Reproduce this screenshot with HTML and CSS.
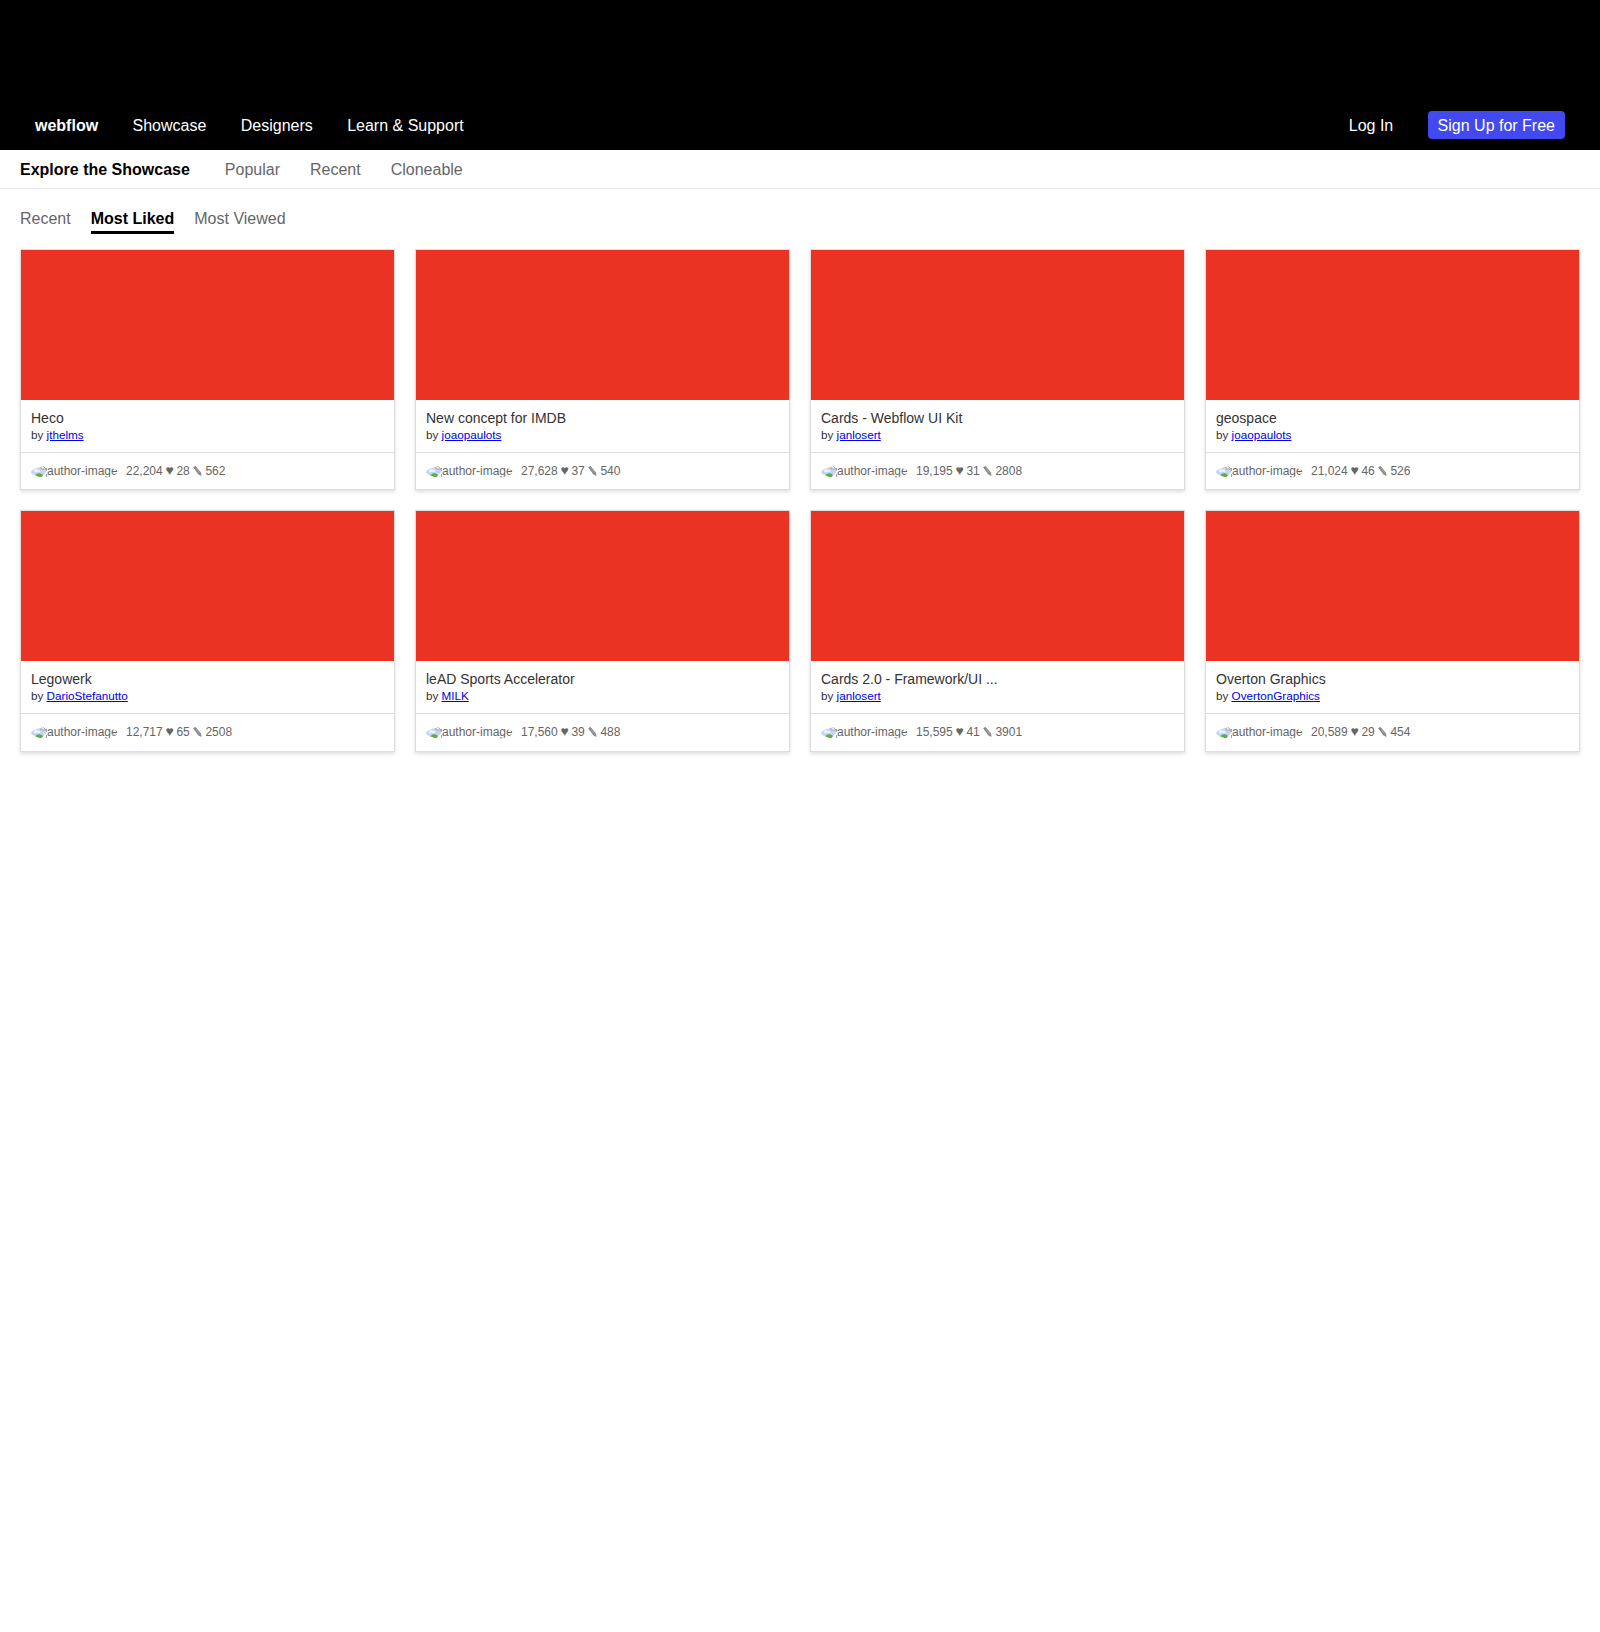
FILE: index.html
```html
<!DOCTYPE html>
<html lang="en">
<head>
<meta charset="utf-8">
<title>Webflow Showcase</title>
<link rel="stylesheet" href="styles.css">
</head>
<body>
<svg class="symbols" aria-hidden="true">
  <symbol id="broken" viewBox="0 0 16 16">
    <path d="M0 0h10l5 5v4l-5 5H0z" fill="#c5d5f5"/>
    <path d="M10 0l5 5h-5z" fill="#eee" stroke="#999" stroke-width=".8"/>
    <path d="M3 7c0-2 3-3 4-1 2-1 3 1 2 2H3z" fill="#edf3ff"/>
    <path d="M3 13c2-4 6-5 9-2l-2 3H3z" fill="#61ad45"/>
    <path d="M10 14l5-6v6z" fill="#fff"/>
    <path d="M15.5 4v3M15.5 10v3" fill="none" stroke="#999" stroke-width=".9"/>
  </symbol>
  <symbol id="pencil" viewBox="0 0 9 10">
    <path d="M.7 1.2L2.5.5l5 6 .6 2.8-2.6-1.2z" fill="#aaa" stroke="#777" stroke-width=".8"/>
    <path d="M1 2.5l2-1.5M5.3 8l2-1.5M2 2l4.5 5.5" stroke="#777" stroke-width=".6"/>
  </symbol>
</svg>
<header class="topbar">
  <nav class="topnav">
    <a class="brand">webflow</a><a>Showcase</a><a>Designers</a><a>Learn &amp; Support</a>
  </nav>
  <nav class="topnav"><a>Log In</a><a class="signup">Sign Up for Free</a></nav>
</header>
<nav class="subnav"><strong>Explore the Showcase</strong><a>Popular</a><a>Recent</a><a>Cloneable</a></nav>
<nav class="tabs"><a>Recent</a><a class="active">Most Liked</a><a>Most Viewed</a></nav>
<main class="grid">
  <article class="card"><div class="thumb"></div><div class="info"><h2>Heco</h2><p>by <a href="#">jthelms</a></p></div><footer><span class="author"><svg><use href="#broken"/></svg>author-image</span><span class="stats">22,204 <b>♥</b> 28 <svg><use href="#pencil"/></svg> 562</span></footer></article>
  <article class="card"><div class="thumb"></div><div class="info"><h2>New concept for IMDB</h2><p>by <a href="#">joaopaulots</a></p></div><footer><span class="author"><svg><use href="#broken"/></svg>author-image</span><span class="stats">27,628 <b>♥</b> 37 <svg><use href="#pencil"/></svg> 540</span></footer></article>
  <article class="card"><div class="thumb"></div><div class="info"><h2>Cards - Webflow UI Kit</h2><p>by <a href="#">janlosert</a></p></div><footer><span class="author"><svg><use href="#broken"/></svg>author-image</span><span class="stats">19,195 <b>♥</b> 31 <svg><use href="#pencil"/></svg> 2808</span></footer></article>
  <article class="card"><div class="thumb"></div><div class="info"><h2>geospace</h2><p>by <a href="#">joaopaulots</a></p></div><footer><span class="author"><svg><use href="#broken"/></svg>author-image</span><span class="stats">21,024 <b>♥</b> 46 <svg><use href="#pencil"/></svg> 526</span></footer></article>
  <article class="card"><div class="thumb"></div><div class="info"><h2>Legowerk</h2><p>by <a href="#">DarioStefanutto</a></p></div><footer><span class="author"><svg><use href="#broken"/></svg>author-image</span><span class="stats">12,717 <b>♥</b> 65 <svg><use href="#pencil"/></svg> 2508</span></footer></article>
  <article class="card"><div class="thumb"></div><div class="info"><h2>leAD Sports Accelerator</h2><p>by <a href="#">MILK</a></p></div><footer><span class="author"><svg><use href="#broken"/></svg>author-image</span><span class="stats">17,560 <b>♥</b> 39 <svg><use href="#pencil"/></svg> 488</span></footer></article>
  <article class="card"><div class="thumb"></div><div class="info"><h2>Cards 2.0 - Framework/UI ...</h2><p>by <a href="#">janlosert</a></p></div><footer><span class="author"><svg><use href="#broken"/></svg>author-image</span><span class="stats">15,595 <b>♥</b> 41 <svg><use href="#pencil"/></svg> 3901</span></footer></article>
  <article class="card"><div class="thumb"></div><div class="info"><h2>Overton Graphics</h2><p>by <a href="#">OvertonGraphics</a></p></div><footer><span class="author"><svg><use href="#broken"/></svg>author-image</span><span class="stats">20,589 <b>♥</b> 29 <svg><use href="#pencil"/></svg> 454</span></footer></article>
</main>
</body>
</html>
```
FILE: styles.css
```css
* { box-sizing: border-box; }
body { margin: 0; min-height: 100vh; background: #fff; font: 16px/18px "Liberation Sans", Arial, sans-serif; color: #333; }
.symbols { display: none; }
.topbar { height: 150px; padding: 0 35px 10px; background: #000; color: #fff; display: flex; justify-content: space-between; align-items: flex-end; }
.topnav { display: flex; gap: 34.4px; align-items: center; height: 28px; }
.brand { font-weight: bold; }
.signup { background: #4149ef; border-radius: 4px; padding: 6px 10px 4px; margin-top: -2px; }
.subnav { height: 39px; padding: 1px 20px 0; display: flex; align-items: center; gap: 30px; border-bottom: 1px solid #eaeaea; color: #666; }
.subnav strong { color: #000; margin-right: 5px; }
.tabs { display: flex; gap: 20px; padding: 21px 20px 0; height: 60px; color: #666; }
.active { color: #000; font-weight: bold; border-bottom: 3px solid #000; height: 24px; }
.grid { display: grid; grid-template-columns: repeat(4, 1fr); grid-template-rows: 241px 242px; gap: 20px; padding: 0 20px 20px; }
.card { display: flex; flex-direction: column; border: 1px solid #ddd; box-shadow: 0 2px 4px rgba(0,0,0,.13); }
.thumb { height: 150px; flex: none; background: #ea3323; }
.info { height: 52px; flex: none; padding: 10px 10px 0; }
.info h2 { margin: 0; font-size: 14px; line-height: 16px; font-weight: normal; }
.info p { margin: 2px 0 0; font-size: 11.7px; line-height: 13px; }
.info a { color: #0000ee; }
footer { flex: 1; border-top: 1px solid #ddd; padding: 11px 10px 0; display: flex; gap: 8px; font-size: 12px; line-height: 15px; color: #666; white-space: nowrap; }
.author { display: flex; width: 87px; height: 16px; border-radius: 50%; overflow: hidden; }
.author svg { width: 16px; height: 16px; flex: none; }
.stats b { display: inline-block; width: 7px; font-size: 14px; line-height: 10px; font-weight: normal; transform: translateX(-.5px); }
.stats svg { width: 9px; height: 10px; vertical-align: -1px; }
```
